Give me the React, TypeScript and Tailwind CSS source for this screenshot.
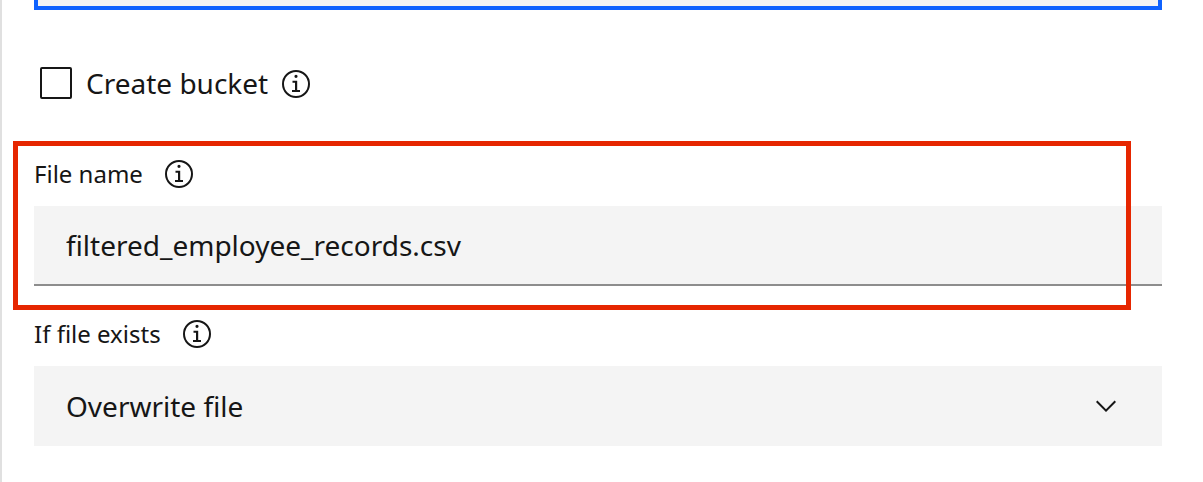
import { useState } from "react";

function InfoIcon() {
  return (
    <svg viewBox="0 0 32 32" className="h-8 w-8" fill="#161616" aria-hidden="true">
      <path d="M17.2 22v-9.2H12.5v2h2.5V22h-3v2h8v-2zM16 6.7a1.6 1.6 0 1 0 1.6 1.6A1.6 1.6 0 0 0 16 6.7z" />
      <path d="M16 30a14 14 0 1 1 14-14 14 14 0 0 1-14 14zm0-26a12 12 0 1 0 12 12A12 12 0 0 0 16 4z" />
    </svg>
  );
}

function InfoButton({ label }: { label: string }) {
  return (
    <button type="button" aria-label={label} className="shrink-0">
      <InfoIcon />
    </button>
  );
}

export default function App() {
  const [bucket, setBucket] = useState("");
  const [createBucket, setCreateBucket] = useState(false);
  const [fileName, setFileName] = useState("filtered_employee_records.csv");
  const [ifExists, setIfExists] = useState("overwrite");

  return (
    <main className="min-h-screen border-l-2 border-[#e0e0e0] bg-white pr-[41px] pl-8 font-['Noto_Sans',sans-serif] text-[#161616]">
      <form className="flex flex-col">
        <input
          aria-label="Bucket"
          value={bucket}
          onChange={(e) => setBucket(e.target.value)}
          className="h-2.5 w-full border-4 border-t-0 border-[#0f62fe] bg-[#f4f4f4] outline-none"
        />

        <div className="mt-[57px] flex items-end gap-3 pl-1.5">
          <label className="flex items-center gap-3.5 pb-px text-[28px] leading-8">
            <input
              type="checkbox"
              checked={createBucket}
              onChange={(e) => setCreateBucket(e.target.checked)}
              className="h-8 w-8 appearance-none rounded-xs border-2 border-[#161616] checked:bg-[#161616]"
            />
            Create bucket
          </label>
          <InfoButton label="About create bucket" />
        </div>

        <div className="relative mt-[58px] flex flex-col gap-4">
          <div className="flex h-8 items-center gap-5">
            <label htmlFor="file-name" className="text-2xl leading-8">
              File name
            </label>
            <InfoButton label="About file name" />
          </div>
          <input
            id="file-name"
            value={fileName}
            onChange={(e) => setFileName(e.target.value)}
            className="h-20 w-full border-b-2 border-[#8d8d8d] bg-[#f4f4f4] px-8 text-[28px] leading-9 outline-none"
          />
          <div className="pointer-events-none absolute -top-[17px] right-[31px] -bottom-6 -left-[21px] border-5 border-[#e62600]" />
        </div>

        <div className="mt-8 flex flex-col gap-4">
          <div className="flex h-8 items-center gap-5">
            <label htmlFor="if-exists" className="text-2xl leading-8">
              If file exists
            </label>
            <InfoButton label="About existing files" />
          </div>
          <div className="relative">
            <select
              id="if-exists"
              value={ifExists}
              onChange={(e) => setIfExists(e.target.value)}
              className="h-20 w-full appearance-none bg-[#f4f4f4] px-8 text-[28px] leading-9 outline-none"
            >
              <option value="overwrite">Overwrite file</option>
            </select>
            <svg
              viewBox="0 0 32 32"
              className="pointer-events-none absolute top-6 right-10 h-8 w-8"
              fill="#161616"
              aria-hidden="true"
            >
              <path d="M16 22 6 12l1.4-1.4 8.6 8.6 8.6-8.6L26 12z" />
            </svg>
          </div>
        </div>
      </form>
    </main>
  );
}
